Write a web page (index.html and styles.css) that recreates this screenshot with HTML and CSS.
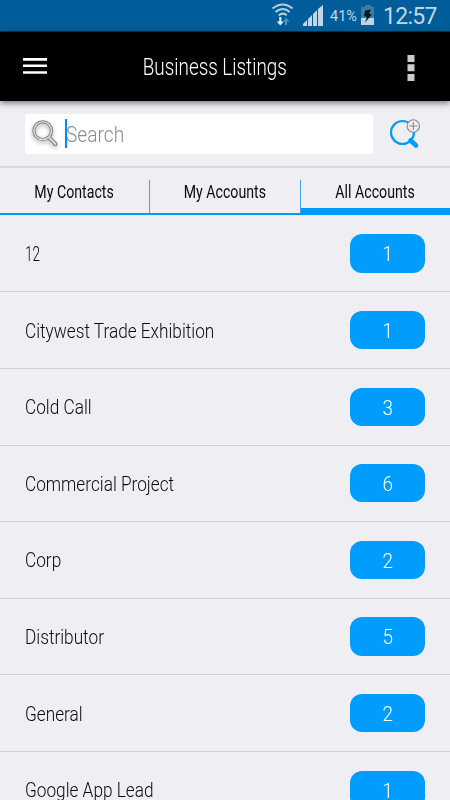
FILE: index.html
```html
<!DOCTYPE html>
<html lang="en">
<head>
<meta charset="utf-8">
<title>Business Listings</title>
<link rel="stylesheet" href="styles.css">
</head>
<body>
<div class="status">
  <svg class="wifi" width="24" height="26" viewBox="0 0 24 26" fill="none" stroke="#b6d1e2" stroke-width="2.100">
    <path d="M1.500 7.500Q12-.500 21.500 7.500M4.500 11Q12 5 18.700 11M7.800 14.300Q12 11 15.700 14.300"/>
    <path stroke="#e2edf5" d="M9.300 16v6"/><path fill="#e2edf5" stroke="none" d="M5.700 20.500h7.200l-3.600 4z"/>
    <path stroke="#5293bd" d="M15 19v5"/><path fill="#5293bd" stroke="none" d="M11.800 20.500l3.300-3.700 3.300 3.700z"/>
  </svg>
  <svg class="signal" width="21" height="22" viewBox="0 0 21 22" fill="#bfd7e7">
    <path d="M0 21v-2l4-4v6zM5 21v-7l4-4v11zM10 21V9l4-4v16zM15 21V4l5-4v21z"/>
  </svg>
  <span class="percent">41%</span>
  <svg class="battery" width="14" height="21" viewBox="0 0 14 21">
    <path fill="#3b7da9" d="M4 0h6v2h3v11H0V2h4z"/><path fill="#bdd5e5" d="M0 13h13v7H0z"/>
    <path fill="#071a26" d="M4 5.500l6-1-2 4 3 1-7 8 2-5.500-3-1z"/>
  </svg>
  <span class="clock">12:57</span>
</div>
<header class="bar">
  <svg class="menu" width="24" height="16" viewBox="0 0 24 16" fill="#fff"><path d="M0 0h24v2.700H0zM0 6.500h24v2.600H0zM0 13.200h24v2.600H0z"/></svg>
  <h1 class="title"><span class="narrow">Business Listings</span></h1>
  <svg class="more" width="8" height="26" viewBox="0 0 8 26" fill="#ccc"><path d="M.5 0h7v7h-7zM.5 9.300h7v7h-7zM.5 19h7v7h-7z"/></svg>
</header>
<div class="search">
  <div class="field">
    <svg class="glass" width="29" height="30" viewBox="0 0 29 30" fill="none">
      <circle cx="11.700" cy="11.700" r="8.800" stroke="#828282" stroke-width="3.200"/>
      <path d="M18 18.500l6.500 6.500" stroke="#828282" stroke-width="3.900" stroke-linecap="round"/>
      <circle cx="11.700" cy="11.700" r="8.800" stroke="#ddd" stroke-width="1.400"/>
      <path d="M18.500 19l6 6" stroke="#ddd" stroke-width="1.800" stroke-linecap="round"/>
    </svg>
    <span class="caret"></span>
    <span class="placeholder"><span class="narrow">Search</span></span>
  </div>
  <svg class="advanced" width="32" height="32" viewBox="0 0 32 32" fill="none">
    <circle cx="13.500" cy="14.500" r="11.500" stroke="#009dff" stroke-width="2.200"/>
    <path d="M21.500 22.500l5.500 5" stroke="#009dff" stroke-width="4.600" stroke-linecap="round"/>
    <circle cx="24.300" cy="8" r="6.200" fill="#efeef3" stroke="#85858b" stroke-width="1.100"/>
    <path d="M24.300 4v8M20.300 8h8" stroke="#85858b" stroke-width="1.100"/>
  </svg>
</div>
<nav class="tabs">
  <div class="tab"><div class="label"><span class="narrow">My Contacts</span></div></div>
  <div class="tab"><div class="label"><span class="narrow">My Accounts</span></div></div>
  <div class="tab active"><div class="label"><span class="narrow">All Accounts</span></div></div>
</nav>
<main class="list">
  <div class="row"><span class="narrow name digits">12</span><span class="badge"><span class="narrow">1</span></span></div>
  <div class="row"><span class="narrow name">Citywest Trade Exhibition</span><span class="badge"><span class="narrow">1</span></span></div>
  <div class="row"><span class="narrow name">Cold Call</span><span class="badge"><span class="narrow">3</span></span></div>
  <div class="row"><span class="narrow name">Commercial Project</span><span class="badge"><span class="narrow">6</span></span></div>
  <div class="row"><span class="narrow name">Corp</span><span class="badge"><span class="narrow">2</span></span></div>
  <div class="row"><span class="narrow name">Distributor</span><span class="badge"><span class="narrow">5</span></span></div>
  <div class="row"><span class="narrow name">General</span><span class="badge"><span class="narrow">2</span></span></div>
  <div class="row"><span class="narrow name">Google App Lead</span><span class="badge"><span class="narrow">1</span></span></div>
</main>
</body>
</html>
```
FILE: styles.css
```css
* { box-sizing: border-box; }
body {
  margin: 0;
  height: 800px;
  overflow: hidden;
  background: #efeef3;
  color: #0a0a0a;
  font-family: Roboto, "Liberation Sans", sans-serif;
  font-weight: 300;
}
svg { display: block; flex: none; }
.narrow { display: inline-block; transform: scaleX(.82); white-space: nowrap; }
.status {
  display: flex;
  height: 32px;
  padding-left: 271px;
  background: #005d99;
  border-bottom: 1px solid #003354;
  color: #bfd7e7;
  font-weight: 400;
}
.wifi { margin-top: 1px; }
.signal { margin: 5px 0 0 8px; }
.percent { width: 31px; margin-left: 6px; font-size: 14.500px; line-height: 33px; }
.battery { margin-top: 5px; }
.clock { margin-left: 8px; font-size: 23px; line-height: 34px; letter-spacing: -.7px; }
.bar {
  display: flex;
  align-items: center;
  height: 69px;
  padding: 0 35px 0 23px;
  background: #000;
  color: #fff;
  box-shadow: 0 2px 6px rgba(40, 30, 40, .6);
}
.menu { margin-top: -1px; }
.title { flex: 1; margin: 3px 25px 0 1px; text-align: center; font-size: 23px; line-height: 30px; font-weight: 300; }
.more { margin-top: 2px; }
.search { display: flex; justify-content: space-between; height: 67px; padding: 13px 29px 0 25px; border-bottom: 2px solid #d9d8dd; }
.field { display: flex; width: 348px; height: 40px; padding-left: 6px; background: #fff; border-radius: 3px; }
.glass { margin-top: 5px; filter: drop-shadow(0 2px 2px rgba(0, 0, 0, .3)); }
.caret { width: 2px; height: 29px; margin: 5px 0 0 5px; background: #008cff; }
.placeholder { margin-left: -1px; color: #8c8c8c; font-size: 22px; line-height: 42px; }
.placeholder .narrow { transform: scaleX(.87); transform-origin: left; }
.advanced { margin-top: 4px; }
.tabs { display: grid; grid-template-columns: 150px 151px 149px; grid-template-rows: 47px; height: 47px; }
.tab {
  padding-top: 12px;
  border-bottom: 2px solid #0099fc;
  font-size: 17.500px;
  line-height: 25px;
  font-weight: 400;
}
.label { height: 33px; border-right: 1px solid #3ea2f7; text-align: center; }
.tab .narrow { transform: scaleX(.81); }
.tab.active { border-bottom-width: 7px; }
.active .label { height: 28px; border-right: 0; }
.list { margin-top: .6px; }
.row {
  display: flex;
  align-items: center;
  justify-content: space-between;
  height: 76.650px;
  padding: 0 25px;
  border-bottom: 1px solid #d0cfd4;
}
.name { padding-top: 1px; font-size: 21px; transform-origin: left; }
.digits { transform: scaleX(.65); }
.badge {
  width: 75px;
  height: 38.300px;
  border-radius: 12px;
  background: #009dff;
  color: #fff;
  font-size: 21px;
  line-height: 40px;
  text-align: center;
}
.badge .narrow { transform: scaleX(.9); }
```
